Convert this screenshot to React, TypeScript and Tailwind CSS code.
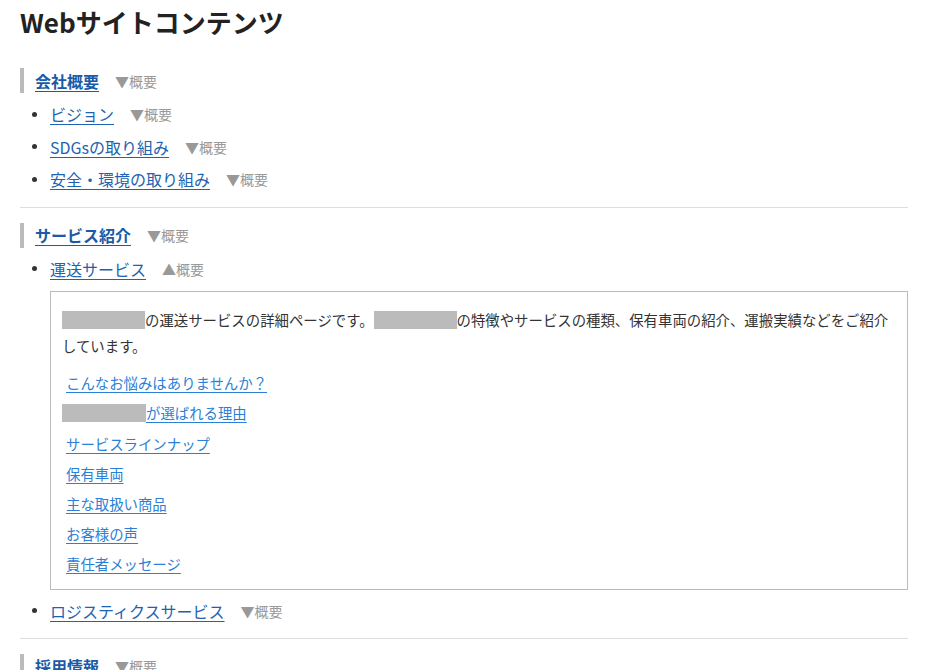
import React from "react";

const Toggle = ({ open = false }: { open?: boolean }) => (
  <span className="ml-[16px] text-[14px] text-[#999] leading-none">{open ? "▲" : "▼"}概要</span>
);

const Item = ({ label, open = false, children }: { label: string; open?: boolean; children?: React.ReactNode }) => (
  <li className="flex flex-col">
    <div className="flex items-center h-[32.5px]">
      <span className="ml-[12px] mr-[13px] w-[5px] h-[5px] rounded-full bg-[#333]" />
      <a href="#" className="text-[16px] text-[#1d63b0] underline underline-offset-[3px] decoration-1">{label}</a>
      <Toggle open={open} />
    </div>
    {children}
  </li>
);

const Heading = ({ label }: { label: string }) => (
  <div className="flex items-center h-[25px] border-l-4 border-[#bbb] pl-[11px]">
    <a href="#" className="text-[16px] font-bold text-[#1a5aa6] underline underline-offset-[3px] decoration-1">{label}</a>
    <Toggle />
  </div>
);

const Redact = ({ w = 83 }: { w?: number }) => (
  <span className="inline-block h-[18px] bg-[#bbb] align-[-3px]" style={{ width: w }} />
);

const boxLinks = [
  "こんなお悩みはありませんか？",
  "__REDACT__が選ばれる理由",
  "サービスラインナップ",
  "保有車両",
  "主な取扱い商品",
  "お客様の声",
  "責任者メッセージ",
];

export default function App() {
  return (
    <div className="w-[930px] min-h-[670px] bg-white text-[#333] font-['Noto_Sans_CJK_JP','Noto_Sans',sans-serif] overflow-hidden">
      <div className="ml-[20px] w-[888px]">
        <h1 className="pt-[2px] text-[26px] font-bold leading-[40px] text-[#222]">Webサイトコンテンツ</h1>

        <section className="mt-[26px]">
          <Heading label="会社概要" />
          <ul className="mt-[5px]">
            <Item label="ビジョン" />
            <Item label="SDGsの取り組み" />
            <Item label="安全・環境の取り組み" />
          </ul>
        </section>

        <div className="mt-[11px] h-px bg-[#ddd]" />

        <section className="mt-[15px]">
          <Heading label="サービス紹介" />
          <ul className="mt-[5px]">
            <Item label="運送サービス" open>
              <div className="mt-[6px] mb-[4px] ml-[30px] border border-[#bbb] pl-[11px] pr-[11px] pt-[15px] pb-[10px]">
                <p className="text-[14.4px] leading-[26px] text-[#333]">
                  <Redact />の運送サービスの詳細ページです。<Redact />の特徴やサービスの種類、保有車両の紹介、運搬実績などをご紹介しています。
                </p>
                <div className="mt-[9px] flex flex-col">
                  {boxLinks.map((l) =>
                    l.startsWith("__REDACT__") ? (
                      <div key={l} className="h-[30.2px] flex items-center">
                        <span className="inline-block w-[84px] h-[18px] bg-[#bbb]" />
                        <a href="#" className="text-[14.4px] text-[#2b7fd6] underline underline-offset-[3px] decoration-1">
                          {l.replace("__REDACT__", "")}
                        </a>
                      </div>
                    ) : (
                      <div key={l} className="h-[30.2px] flex items-center">
                        <a href="#" className="ml-[4px] text-[14.4px] text-[#2b7fd6] underline underline-offset-[3px] decoration-1">
                          {l}
                        </a>
                      </div>
                    )
                  )}
                </div>
              </div>
            </Item>
            <Item label="ロジスティクスサービス" />
          </ul>
        </section>

        <div className="mt-[11px] h-px bg-[#ddd]" />

        <section className="mt-[15px]">
          <Heading label="採用情報" />
          <ul className="mt-[5px]">
            <Item label="採用メッセージ" />
          </ul>
        </section>
      </div>
    </div>
  );
}
